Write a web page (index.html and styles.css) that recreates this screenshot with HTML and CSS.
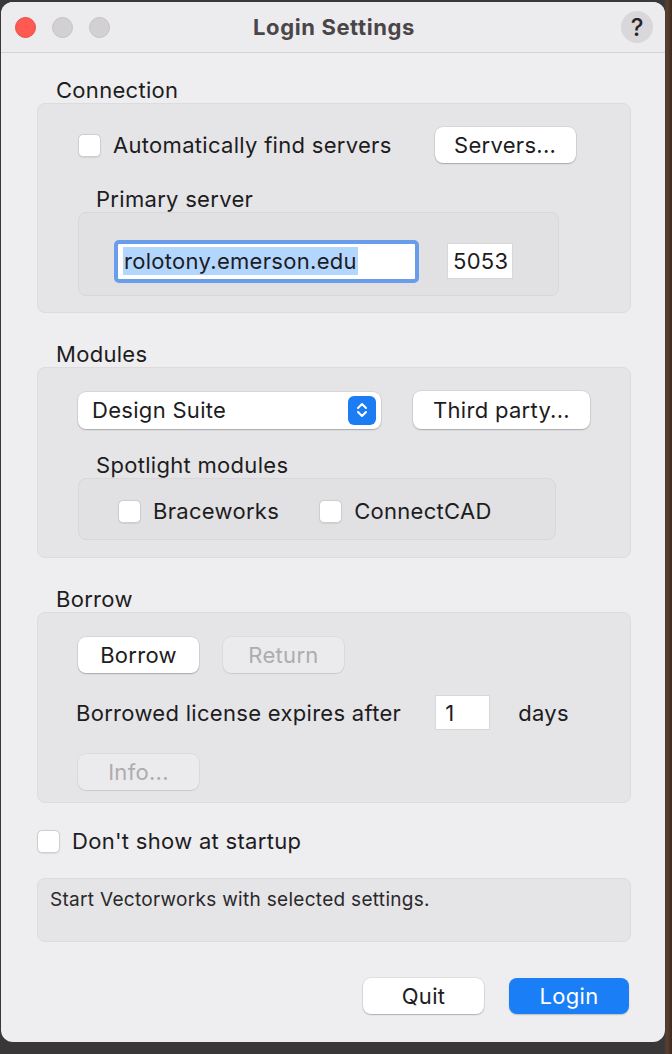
FILE: index.html
```html
<!DOCTYPE html>
<html>
<head>
<meta charset="utf-8">
<link rel="stylesheet" href="styles.css">
</head>
<body>
<div class="desk">
  <div class="window">
    <div class="titlebar">
      <div class="lights">
        <span class="light red"></span>
        <span class="light gray"></span>
        <span class="light gray"></span>
      </div>
      <div class="title">Login Settings</div>
      <div class="help"><span class="help-btn">?</span></div>
    </div>
    <div class="content">
      <div class="label">Connection</div>
      <div class="group conn">
        <div class="row row-auto">
          <label class="check"><span class="box"></span><span>Automatically find servers</span></label>
          <button class="btn btn-servers">Servers...</button>
        </div>
        <div class="sublabel">Primary server</div>
        <div class="inner server-inner">
          <div class="field focus"><span class="sel">rolotony.emerson.edu</span></div>
          <div class="field port">5053</div>
        </div>
      </div>

      <div class="label">Modules</div>
      <div class="group mods">
        <div class="row row-mods">
          <div class="popup">
            <span>Design Suite</span>
            <span class="stepper">
              <svg width="14" height="20" viewBox="0 0 14 20"><path d="M3 8 L7 4 L11 8" fill="none" stroke="#fff" stroke-width="2" stroke-linecap="round" stroke-linejoin="round"/><path d="M3 12 L7 16 L11 12" fill="none" stroke="#fff" stroke-width="2" stroke-linecap="round" stroke-linejoin="round"/></svg>
            </span>
          </div>
          <button class="btn btn-third">Third party...</button>
        </div>
        <div class="sublabel">Spotlight modules</div>
        <div class="inner spot-inner">
          <label class="check"><span class="box"></span><span>Braceworks</span></label>
          <label class="check"><span class="box"></span><span>ConnectCAD</span></label>
        </div>
      </div>

      <div class="label">Borrow</div>
      <div class="group borrow">
        <div class="row row-borrow">
          <button class="btn btn-small">Borrow</button>
          <button class="btn btn-small disabled">Return</button>
        </div>
        <div class="row row-expire">
          <span>Borrowed license expires after</span>
          <div class="field days">1</div>
          <span class="days-label">days</span>
        </div>
        <div class="row row-info">
          <button class="btn btn-small disabled">Info...</button>
        </div>
      </div>

      <label class="check startup"><span class="box"></span><span>Don't show at startup</span></label>

      <div class="status">Start Vectorworks with selected settings.</div>

      <div class="actions">
        <button class="btn btn-action">Quit</button>
        <button class="btn btn-action primary">Login</button>
      </div>
    </div>
  </div>
</div>
</body>
</html>
```
FILE: styles.css
```css
* { box-sizing: border-box; }
html, body {
  margin: 0;
  padding: 0;
  width: 672px;
  height: 1054px;
  overflow: hidden;
}
body {
  background: #3a3739;
  font-family: Inter, "Open Sans", "Liberation Sans", sans-serif;
  color: #1d1c1e;
  letter-spacing: 0.3px;
}
.desk {
  width: 672px;
  height: 1054px;
  padding: 2px 0 0 1px;
  background: linear-gradient(90deg, #3a3739 0, #3a3739 664px, #5a4030 667px, #3d2a20 672px);
}
.window {
  width: 664px;
  height: 1040px;
  background: #eeedef;
  border-radius: 12px;
  overflow: hidden;
}
.titlebar {
  height: 51px;
  display: flex;
  align-items: center;
  justify-content: space-between;
  padding: 0 12px 0 14px;
  border-bottom: 1px solid #d4d2d4;
  background: #ecebed;
}
.lights { display: flex; gap: 16px; align-items: center; width: 110px; }
.light {
  width: 21px; height: 21px; border-radius: 50%;
}
.light.red { background: #fe5a52; border: 1px solid #e84a43; }
.light.gray { background: #d2d0d2; border: 1px solid #c4c2c4; }
.title {
  font-weight: 700;
  font-size: 22px;
  color: #4a4548;
  letter-spacing: 0.6px;
}
.help {
  width: 110px;
  display: flex;
  justify-content: flex-end;
}
.help-btn {
  display: flex;
  align-items: center;
  justify-content: center;
  width: 32px; height: 32px;
  border-radius: 50%;
  background: #d9d7d9;
  color: #262426;
  font-size: 24px;
  font-weight: 500;
  letter-spacing: 0;
}
.content {
  padding: 24px 34px 0 36px;
}
.label {
  font-size: 22px;
  line-height: 26px;
  height: 26px;
  padding-left: 19px;
}
.group {
  background: #e5e4e6;
  border: 1px solid #dddbdd;
  border-radius: 8px;
  margin-bottom: 28px;
}
.conn { height: 210px; padding: 23px 0 0 40px; }
.mods { height: 191px; padding: 23px 0 0 40px; }
.borrow { height: 191px; padding: 24px 0 0 40px; margin-bottom: 25px; }
.row { display: flex; align-items: center; }
.row-auto { height: 36px; }
.check {
  display: flex;
  align-items: center;
  font-size: 22px;
}
.box {
  width: 23px; height: 23px;
  background: #fff;
  border: 1px solid #cfcdcf;
  border-radius: 5px;
  box-shadow: 0 0.5px 1px rgba(0,0,0,0.08);
  margin-right: 12px;
  flex: none;
}
.btn {
  font-family: inherit;
  font-size: 22px;
  letter-spacing: 0.3px;
  color: #1d1c1e;
  background: #fff;
  border: none;
  border-radius: 8px;
  box-shadow: 0 0 0 0.5px rgba(0,0,0,0.12), 0 1px 1.5px rgba(0,0,0,0.22);
  height: 36px;
  padding: 0;
}
.btn-servers { width: 141px; margin-left: 43px; }
.sublabel {
  font-size: 22px;
  line-height: 26px;
  height: 26px;
  margin-top: 23px;
  padding-left: 18px;
}
.inner {
  background: #e1e0e2;
  border: 1px solid #d9d7d9;
  border-radius: 8px;
}
.server-inner {
  width: 481px;
  height: 84px;
  display: flex;
  align-items: center;
  padding: 14px 0 0 35px;
}
.field {
  background: #fff;
  font-size: 22px;
  display: flex;
  align-items: center;
}
.field.focus {
  width: 305px;
  height: 43px;
  border: 4px solid #6a9cec;
  border-radius: 5px;
  padding-left: 5px;
  flex: none;
}
.sel {
  background: #b3d6fe;
  line-height: 28px;
  padding: 0 1px;
}
.field.port {
  width: 66px;
  height: 36px;
  margin-left: 28px;
  padding-left: 5px;
  border: 1px solid #d8d8d8;
  flex: none;
}
.row-mods { height: 38px; }
.popup {
  width: 303px;
  height: 37px;
  background: #fff;
  border-radius: 8px;
  box-shadow: 0 0 0 0.5px rgba(0,0,0,0.12), 0 1px 1.5px rgba(0,0,0,0.22);
  display: flex;
  align-items: center;
  justify-content: space-between;
  padding: 0 5px 0 14px;
  font-size: 22px;
  flex: none;
}
.stepper {
  width: 28px; height: 29px;
  border-radius: 6px;
  background: #1b7cf3;
  display: flex;
  align-items: center;
  justify-content: center;
}
.btn-third { width: 177px; height: 38px; margin-left: 32px; flex: none; }
.spot-inner {
  width: 478px;
  height: 62px;
  display: flex;
  align-items: center;
  padding: 4px 0 0 39px;
  gap: 40px;
}
.row-borrow { gap: 24px; }
.btn-small { width: 121px; height: 36px; }
.btn.disabled {
  background: #ebeaec;
  color: #aeacae;
  box-shadow: 0 0 0 0.5px rgba(0,0,0,0.08), 0 1px 1px rgba(0,0,0,0.08);
}
.row-expire {
  margin-top: 22px;
  margin-left: -2px;
  height: 35px;
  font-size: 22px;
}
.field.days {
  width: 55px;
  height: 35px;
  margin-left: 34px;
  padding-left: 9px;
  border: 1px solid #d8d8d8;
}
.days-label { margin-left: 28px; }
.row-info { margin-top: 24px; }
.startup {
  height: 26px;
  margin-bottom: 24px;
}
.status {
  height: 64px;
  background: #e5e4e6;
  border: 1px solid #dddbdd;
  border-radius: 8px;
  font-size: 19px;
  padding: 9px 0 0 12px;
  color: #2a292b;
}
.actions {
  display: flex;
  justify-content: flex-end;
  gap: 25px;
  margin-top: 36px;
  padding-right: 2px;
}
.btn-action { width: 121px; height: 36px; font-size: 22px; }
.btn.primary {
  background: #1a7ff7;
  color: #fff;
  width: 120px;
  box-shadow: 0 1px 1.5px rgba(0,0,0,0.2);
}
```
